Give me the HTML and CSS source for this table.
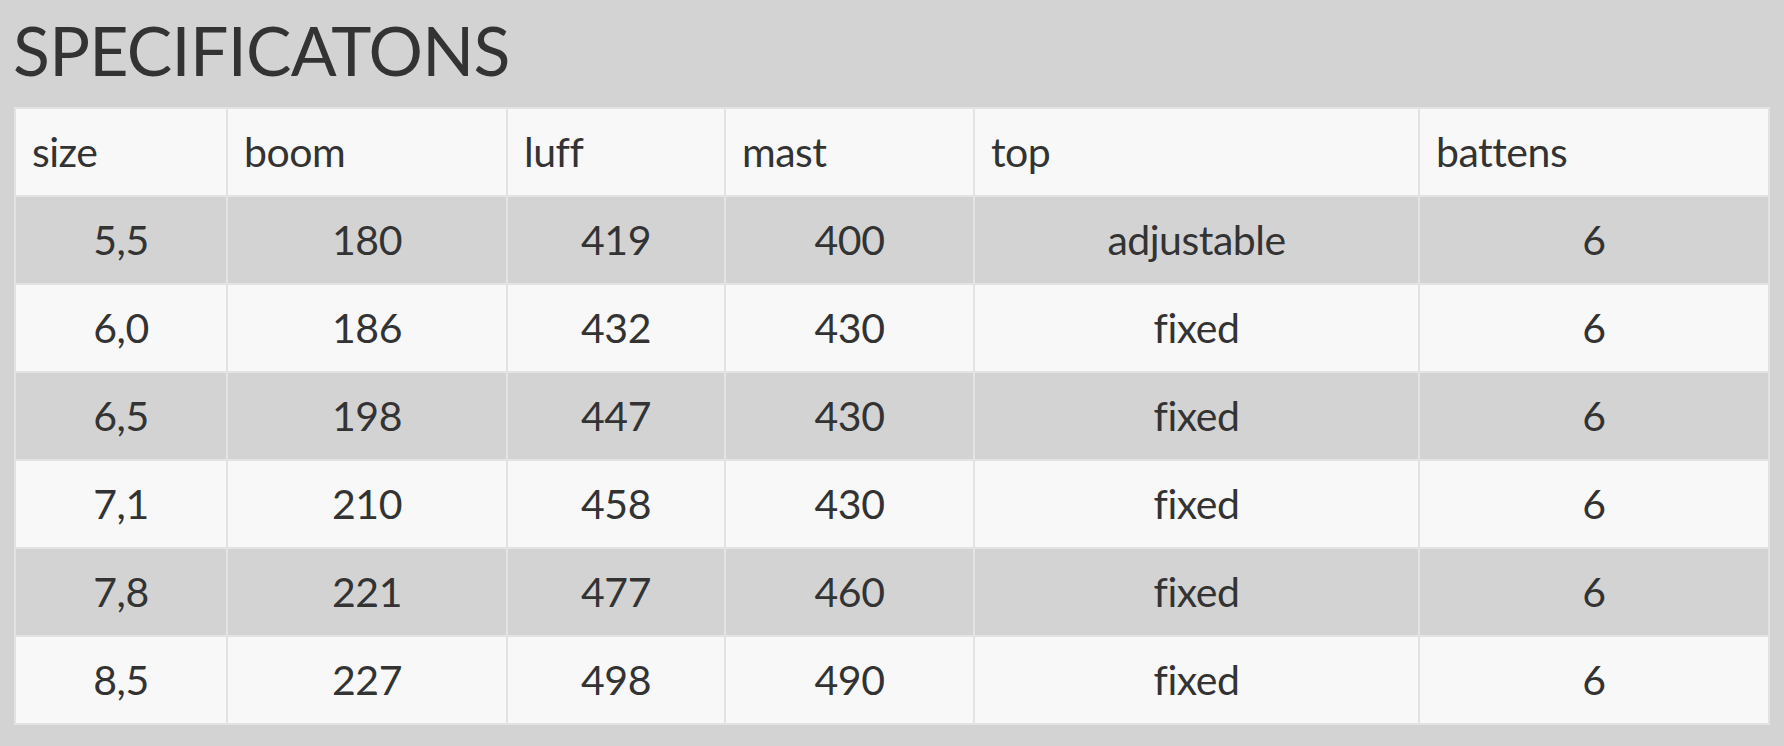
FILE: index.html
```html
<!DOCTYPE html>
<html lang="en">
<head>
<meta charset="utf-8">
<title>Specifications</title>
<link rel="stylesheet" href="styles.css">
</head>
<body>
<section class="specs">
  <h1 class="specs-title">SPECIFICATONS</h1>
  <table class="specs-table">
    <colgroup>
      <col class="c-size">
      <col class="c-boom">
      <col class="c-luff">
      <col class="c-mast">
      <col class="c-top">
      <col class="c-battens">
    </colgroup>
    <thead>
      <tr><th>size</th><th>boom</th><th>luff</th><th>mast</th><th>top</th><th>battens</th></tr>
    </thead>
    <tbody>
      <tr><td>5,5</td><td>180</td><td>419</td><td>400</td><td>adjustable</td><td>6</td></tr>
      <tr><td>6,0</td><td>186</td><td>432</td><td>430</td><td>fixed</td><td>6</td></tr>
      <tr><td>6,5</td><td>198</td><td>447</td><td>430</td><td>fixed</td><td>6</td></tr>
      <tr><td>7,1</td><td>210</td><td>458</td><td>430</td><td>fixed</td><td>6</td></tr>
      <tr><td>7,8</td><td>221</td><td>477</td><td>460</td><td>fixed</td><td>6</td></tr>
      <tr><td>8,5</td><td>227</td><td>498</td><td>490</td><td>fixed</td><td>6</td></tr>
    </tbody>
  </table>
</section>
</body>
</html>
```

FILE: styles.css
```css
html, body {
  margin: 0;
  padding: 0;
  background: #d3d3d3;
}

body {
  font-family: Lato, "Open Sans", "Liberation Sans", sans-serif;
  color: #333333;
}

.specs {
  padding: 9px 16px 0 14px;
}

.specs-title {
  margin: 0 0 16px -1px;
  font-size: 68px;
  font-weight: 400;
  line-height: 1.2;
  letter-spacing: -0.7px;
}

.specs-table {
  width: 1754px;
  border-collapse: collapse;
  table-layout: fixed;
  font-size: 41px;
  letter-spacing: -0.5px;
}

.c-size { width: 212px; }
.c-boom { width: 280px; }
.c-luff { width: 218px; }
.c-mast { width: 249px; }
.c-top { width: 445px; }
.c-battens { width: 350px; }

.specs-table th,
.specs-table td {
  border: 2px solid #e3e3e3;
  height: 88px;
  padding: 0 16px;
  vertical-align: middle;
  box-sizing: border-box;
  line-height: 1;
}

.specs-table th {
  text-align: left;
  font-weight: 400;
  background: #f8f8f8;
}

.specs-table td {
  text-align: center;
}

.specs-table tbody tr:nth-child(odd) td {
  background: #d3d3d3;
}

.specs-table tbody tr:nth-child(even) td {
  background: #f8f8f8;
}
```
